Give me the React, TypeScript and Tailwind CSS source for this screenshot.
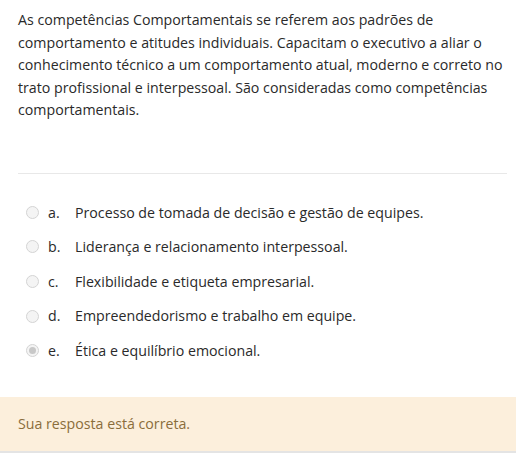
import React from 'react'

const options = [
  { letter: 'a.', text: 'Processo de tomada de decisão e gestão de equipes.' },
  { letter: 'b.', text: 'Liderança e relacionamento interpessoal.' },
  { letter: 'c.', text: 'Flexibilidade e etiqueta empresarial.' },
  { letter: 'd.', text: 'Empreendedorismo e trabalho em equipe.' },
  { letter: 'e.', text: 'Ética e equilíbrio emocional.', checked: true },
]

function Radio({ checked }: { checked?: boolean }) {
  return (
    <span className="flex h-[13px] w-[13px] items-center justify-center rounded-full border border-[#d4d4d4] bg-[#f4f4f4]">
      {checked && <span className="h-[7px] w-[7px] rounded-full bg-[#c8c8c8]" />}
    </span>
  )
}

export default function App() {
  return (
    <div className="w-[519px] h-[457px] bg-white font-['Open_Sans',sans-serif] text-[14.2px] text-[#2a2a2a]">
      <div className="pl-[18px] pr-[12px] pt-[9px]">
        <p className="leading-[22.6px]">
          As competências Comportamentais se referem aos padrões de comportamento e atitudes individuais. Capacitam o executivo a aliar o conhecimento técnico a um comportamento atual, moderno e correto no trato profissional e interpessoal. São consideradas como competências comportamentais.
        </p>
        <div className="mt-[51px] border-t border-[#e8e8e8]" />
        <ul className="mt-[21px] flex flex-col">
          {options.map((o) => (
            <li key={o.letter} className="flex h-[34.6px] items-center pl-[8px]">
              <Radio checked={o.checked} />
              <span className="ml-[9px] w-[27px]">{o.letter}</span>
              <span>{o.text}</span>
            </li>
          ))}
        </ul>
      </div>
      <div className="mt-[29px] mr-[3px] h-[56px] flex items-center px-[18px] bg-[#fcefdc] border-b-2 border-[#e4e4e4] text-[#8a6d3b]">
        Sua resposta está correta.
      </div>
    </div>
  )
}
